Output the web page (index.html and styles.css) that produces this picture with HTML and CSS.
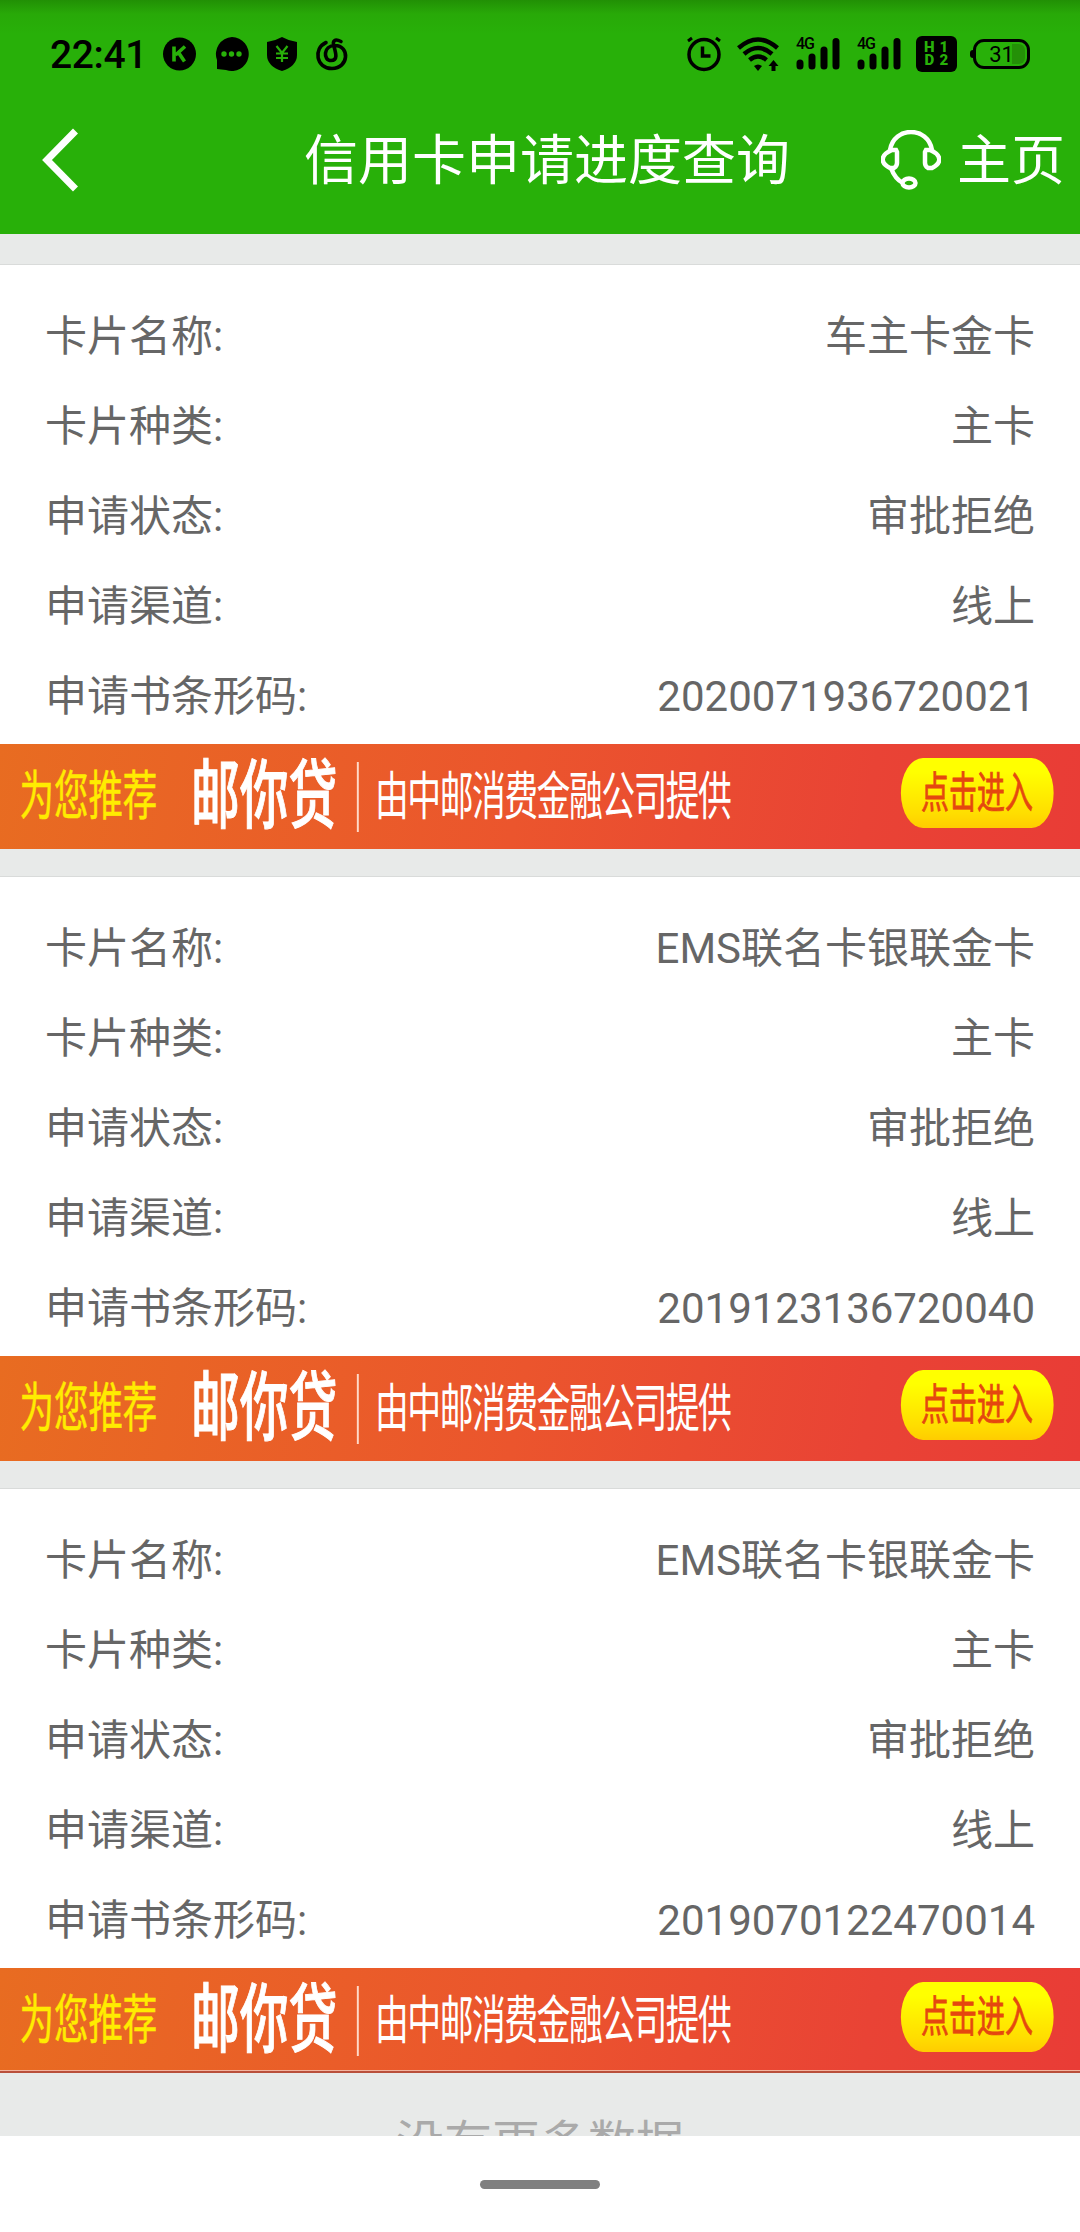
FILE: index.html
```html
<!DOCTYPE html>
<html lang="zh-CN">
<head>
<meta charset="UTF-8" />
<meta name="viewport" content="width=device-width, initial-scale=1" />
<title>信用卡申请进度查询</title>
<link rel="stylesheet" href="styles.css">
</head>
<body>

<header class="header">
  <div class="status-bar">
    <div class="status-left">
      <span class="time">22:41</span>
      <svg class="notices" width="186" height="36" viewBox="162 36 186 36">
        <circle cx="179.500" cy="54" r="16.500" />
        <path d="M174 46.500V61.500M185 46.500L175.500 55M178.500 52.500L184.500 61.500" fill="none" stroke="#28b009" stroke-width="3.600" />
        <path d="M232 37a17 17 0 1 1-6 33l-9-1v-9a17 17 0 0 1 15-23z" />
        <g fill="#28b009"><circle cx="224" cy="54" r="2.700" /><circle cx="231.500" cy="54" r="2.700" /><circle cx="239" cy="54" r="2.700" /></g>
        <path d="M282 37q7 4 15 5v13q0 11-15 16q-15-5-15-16V42q8-1 15-5z" />
        <path d="M276.500 46l5.500 7 5.500-7M282 53v9M276 53.500h12M276 58h12" fill="none" stroke="#28b009" stroke-width="2.200" />
        <path d="M326 42.500c-13 6-10 26 6 26c17 0 18-23 3-23c-12 0-12 15-4 15c7 0 5-7 3-14c-2-6 1-8 7-5" fill="none" stroke="#000" stroke-width="3.600" stroke-linecap="round" />
      </svg>
    </div>
    <div class="status-right">
      <svg width="36" height="36" viewBox="0 0 36 36" fill="none" stroke="#000">
        <circle cx="18" cy="18.500" r="15" stroke-width="3.500" />
        <path d="M16.500 10.500v9.500h8" stroke-width="3.500" />
        <path d="M2 5l4-3M34 5l-4-3" stroke-width="3" />
      </svg>
      <svg class="wifi" width="42" height="36" viewBox="0 0 42 36" fill="none" stroke="#000" stroke-width="4.500">
        <path d="M1.500 12q19.500-17 39 0M7 18q14-12 28 0M12.500 24q8.500-7 17 0" />
        <path d="M17 30q4-3 8 0l-4 5z" fill="#000" stroke="none" />
        <path d="M36.500 24l5 6h-3v5h-4v-5h-3z" fill="#000" stroke="none" />
      </svg>
      <div class="signal">
        <span>4G</span>
        <svg width="44" height="34" viewBox="0 0 44 34" stroke="#000" stroke-width="7" stroke-linecap="round"><path d="M4 26v3M16 20v9M28 13v16M40 4.500v24.500" /></svg>
      </div>
      <div class="signal">
        <span>4G</span>
        <svg width="44" height="34" viewBox="0 0 44 34" stroke="#000" stroke-width="7" stroke-linecap="round"><path d="M4 26v3M16 20v9M28 13v16M40 4.500v24.500" /></svg>
      </div>
      <div class="hd"><span>H</span><span>1</span><span>D</span><span>2</span></div>
      <div class="battery"><span>31</span></div>
    </div>
  </div>
  <div class="nav-bar">
    <svg class="back" width="40" height="66" viewBox="0 0 40 66" fill="none" stroke="#fff" stroke-width="7"><path d="M37.500 4L9 33L37.500 62" /></svg>
    <h1>信用卡申请进度查询</h1>
    <div class="nav-right">
      <svg width="60" height="60" viewBox="0 0 60 60" fill="none" stroke="#fff" stroke-width="4.500">
        <path d="M9 20C13-4 47-4 51 20" />
        <path d="M15 20h-4C-1 25-1 33 9 38h4q3-2 3-5V22zM45 20h4c12 5 12 13 2 18h-4q-3-2-3-5V22z" />
        <path d="M10 38q4 11 12 15" />
        <ellipse cx="28" cy="53" rx="6.500" ry="4.500" />
      </svg>
      <span>主页</span>
    </div>
  </div>
</header>

<main class="list">
  <section class="card">
    <dl>
      <dt>卡片名称:</dt><dd>车主卡金卡</dd>
      <dt>卡片种类:</dt><dd>主卡</dd>
      <dt>申请状态:</dt><dd>审批拒绝</dd>
      <dt>申请渠道:</dt><dd>线上</dd>
      <dt>申请书条形码:</dt><dd>2020071936720021</dd>
    </dl>
    <div class="banner">
      <div class="banner-inner">
        <span class="recommend">为您推荐</span>
        <span class="product">邮你贷</span>
        <span class="provider">由中邮消费金融公司提供</span>
        <span class="enter">点击进入</span>
      </div>
    </div>
  </section>

  <section class="card">
    <dl>
      <dt>卡片名称:</dt><dd>EMS联名卡银联金卡</dd>
      <dt>卡片种类:</dt><dd>主卡</dd>
      <dt>申请状态:</dt><dd>审批拒绝</dd>
      <dt>申请渠道:</dt><dd>线上</dd>
      <dt>申请书条形码:</dt><dd>2019123136720040</dd>
    </dl>
    <div class="banner">
      <div class="banner-inner">
        <span class="recommend">为您推荐</span>
        <span class="product">邮你贷</span>
        <span class="provider">由中邮消费金融公司提供</span>
        <span class="enter">点击进入</span>
      </div>
    </div>
  </section>

  <section class="card">
    <dl>
      <dt>卡片名称:</dt><dd>EMS联名卡银联金卡</dd>
      <dt>卡片种类:</dt><dd>主卡</dd>
      <dt>申请状态:</dt><dd>审批拒绝</dd>
      <dt>申请渠道:</dt><dd>线上</dd>
      <dt>申请书条形码:</dt><dd>2019070122470014</dd>
    </dl>
    <div class="banner last">
      <div class="banner-inner">
        <span class="recommend">为您推荐</span>
        <span class="product">邮你贷</span>
        <span class="provider">由中邮消费金融公司提供</span>
        <span class="enter">点击进入</span>
      </div>
    </div>
  </section>

  <p class="no-more">没有更多数据</p>
</main>

<footer class="home-bar"><div class="pill"></div></footer>

</body>
</html>
```
FILE: styles.css
```css
* {
  box-sizing: border-box;
  margin: 0;
  padding: 0;
}
body {
  width: 1080px;
  height: 2232px;
  display: flex;
  flex-direction: column;
  overflow: hidden;
  background: #fff;
  font-family: Roboto, "Noto Sans CJK SC", sans-serif;
}
svg {
  display: block;
  flex: none;
}

/* header */
.header {
  height: 234px;
  flex: none;
  background: linear-gradient(#219005, #28a908 14px, #28b009 34px);
}
.status-bar {
  height: 108px;
  padding: 0 50px;
  display: flex;
  align-items: center;
  justify-content: space-between;
}
.status-left,
.status-right {
  display: flex;
  align-items: center;
}
.time {
  width: 112px;
  padding-top: 1px;
  font-size: 39px;
  font-weight: 500;
  line-height: 46px;
  letter-spacing: -0.4px;
}
.wifi {
  margin-left: 15px;
}
.signal {
  position: relative;
  margin-left: 17px;
}
.signal span {
  position: absolute;
  left: 0;
  top: -1px;
  font-size: 16px;
  line-height: 16px;
  font-weight: 500;
  letter-spacing: -1px;
}
.hd {
  width: 41px;
  height: 36px;
  margin-left: 15px;
  padding: 5px 6px;
  display: grid;
  grid-template-columns: 1fr 1fr;
  border-radius: 6px;
  background: #000;
  color: #28b009;
  font-size: 15px;
  font-weight: 900;
  line-height: 13px;
  text-align: center;
}
.battery {
  position: relative;
  width: 57px;
  height: 30px;
  margin-left: 16px;
  border: 3px solid #000;
  border-radius: 11px;
  background: linear-gradient(90deg, transparent 36px, #249007 36px);
  background-clip: content-box;
  padding: 2px;
  font-size: 22px;
  line-height: 21px;
  text-align: center;
}
.battery::before {
  content: "";
  position: absolute;
  left: -6px;
  top: 8px;
  width: 4px;
  height: 8px;
  border-radius: 3px 0 0 3px;
  background: #000;
}
.nav-bar {
  height: 104px;
  padding: 0 15px 0 38px;
  display: grid;
  grid-template-columns: 266px 1fr auto;
  align-items: center;
  color: #fff;
  font-size: 54px;
  line-height: 80px;
}
.nav-bar h1 {
  padding-top: 3px;
  font-size: 54px;
  font-weight: 400;
}
.nav-right {
  display: flex;
  align-items: center;
  gap: 16px;
}
.nav-right span {
  padding-top: 3px;
}

/* list */
.list {
  height: 1902px;
  flex: none;
  padding-top: 30px;
  overflow: hidden;
  background: #e8eae9;
}
.card {
  height: 585px;
  margin-bottom: 27px;
  border-top: 1px solid #d9dbda;
  background: #fff;
}
.card dl {
  height: 479px;
  padding: 27px 45px 0;
  display: grid;
  grid-template-columns: auto auto;
  grid-auto-rows: 90px;
  align-items: center;
  color: #666;
  font-size: 42px;
  line-height: 60px;
}
.card dd {
  text-align: right;
}

/* banner artwork is squeezed horizontally */
.banner {
  height: 105px;
  overflow: hidden;
  background: linear-gradient(100deg, #e86c21, #eb552d 48%, #e94335 80%, #e93c36);
}
.banner-inner {
  width: 1661.5px;
  height: 105px;
  padding: 0 41px 0 30px;
  display: flex;
  align-items: center;
  transform: scaleX(0.65);
  transform-origin: left;
  color: #fff;
  white-space: nowrap;
}
.recommend {
  width: 264px;
  height: 105px;
  color: #ffec00;
  font-size: 53px;
  line-height: 106px;
  -webkit-text-stroke: 0.5px #ffec00;
}
.product {
  width: 255px;
  font-size: 75px;
  font-weight: 500;
  line-height: 107px;
  -webkit-text-stroke: 1px #fff;
}
.provider {
  height: 70px;
  padding-left: 25px;
  border-left: 3px solid #ffd9c8;
  font-size: 52px;
  line-height: 72px;
  letter-spacing: -2.3px;
}
.enter {
  width: 235px;
  height: 70px;
  margin: 0 0 7px auto;
  border-radius: 34px / 35px;
  background: linear-gradient(#ff0 20%, #fd0 80%, #fc0);
  color: #e5470f;
  font-size: 43px;
  line-height: 70px;
  text-align: center;
  -webkit-text-stroke: 0.8px #e5470f;
}
.last {
  box-shadow: inset 0 -2px #b9503c, inset 0 -3px #f3b49f;
}
.no-more {
  padding-top: 8px;
  color: #aaa;
  font-size: 48px;
  line-height: 72px;
  text-align: center;
}

.home-bar {
  height: 96px;
  display: flex;
  align-items: center;
  justify-content: center;
  background: #fff;
}
.pill {
  width: 120px;
  height: 9px;
  border-radius: 5px;
  background: #808080;
}
```
